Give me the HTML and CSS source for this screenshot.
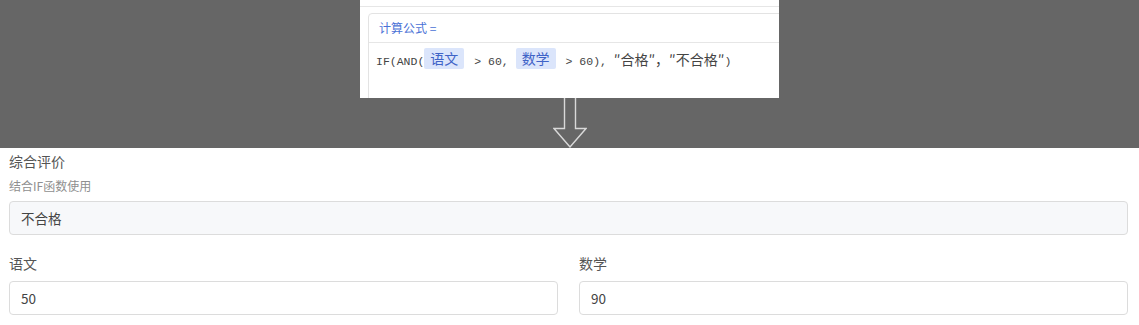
FILE: index.html
```html
<!DOCTYPE html>
<html lang="zh">
<head>
<meta charset="utf-8">
<link rel="stylesheet" href="styles.css">
</head>
<body>
<div class="top">
  <div class="shot">
    <div class="shot-line"></div>
    <div class="card">
      <div class="card-head">计算公式 =</div>
      <div class="card-body">IF(AND(<span class="tag">语文</span> &gt; 60, <span class="tag">数学</span> &gt; 60), <span class="cjk">″合格″，″不合格″</span>)</div>
    </div>
  </div>
  <svg class="arrow" width="34" height="50" viewBox="0 0 34 50">
    <path d="M11.5 0 V30.5 H1 L17 49 L33 30.5 H22.5 V0" fill="none" stroke="#d9d9d9" stroke-width="1.4"/>
  </svg>
</div>
<div class="form">
  <div class="field">
    <div class="label">综合评价</div>
    <div class="hint">结合IF函数使用</div>
    <div class="input readonly">不合格</div>
  </div>
  <div class="row">
    <div class="field">
      <div class="label">语文</div>
      <div class="input">50</div>
    </div>
    <div class="field">
      <div class="label">数学</div>
      <div class="input">90</div>
    </div>
  </div>
</div>
</body>
</html>
```
FILE: styles.css
```css
html, body {
  margin: 0;
  padding: 0;
  background: #ffffff;
  font-family: "Noto Sans CJK SC", "Noto Sans", sans-serif;
}
.top {
  background: #666666;
  height: 148px;
  display: flex;
  flex-direction: column;
  align-items: center;
}
.shot {
  width: 419px;
  height: 98px;
  background: #ffffff;
  overflow: hidden;
  padding-top: 6px;
  box-sizing: border-box;
}
.shot-line {
  border-top: 1px solid #e6e6e6;
}
.card {
  margin: 6px 0 0 8px;
  width: 460px;
  height: 100px;
  border: 1px solid #e3e3e3;
  border-radius: 4px;
}
.card-head {
  height: 28px;
  line-height: 28px;
  padding-left: 10px;
  font-size: 12px;
  color: #4a72d6;
  border-bottom: 1px solid #e6e6e6;
}
.card-body {
  padding: 5px 0 0 7px;
  font-family: "Liberation Mono", "Noto Sans CJK SC", monospace;
  font-size: 11.5px;
  line-height: 22px;
  color: #444444;
  white-space: nowrap;
}
.cjk {
  font-family: "Noto Sans CJK SC", sans-serif;
  font-size: 14px;
  color: #444444;
}
.tag {
  display: inline-block;
  background: #dbe5fb;
  color: #3f63c7;
  font-family: "Noto Sans CJK SC", sans-serif;
  font-size: 14px;
  line-height: 21px;
  padding: 0 6px;
  margin: 0 3px 0 0;
  border-radius: 2px;
  vertical-align: top;
}
.arrow {
  display: block;
  margin-left: 1px;
}
.form {
  padding: 0 11px 0 9px;
  color: #444444;
}
.label {
  font-size: 14px;
  line-height: 16px;
  padding-top: 5px;
  color: #555555;
}
.hint {
  font-size: 12px;
  line-height: 14px;
  margin-top: 10px;
  color: #8f8f8f;
}
.input {
  margin-top: 8px;
  height: 34px;
  box-sizing: border-box;
  border: 1px solid #dcdcdc;
  border-radius: 4px;
  padding-left: 11px;
  font-size: 13.5px;
  line-height: 32px;
  color: #444444;
}
.input.readonly {
  background: #f7f8fa;
}
.row {
  display: grid;
  grid-template-columns: 1fr 1fr;
  column-gap: 21px;
  margin-top: 15px;
}
.row .input {
  margin-top: 10px;
}
```
